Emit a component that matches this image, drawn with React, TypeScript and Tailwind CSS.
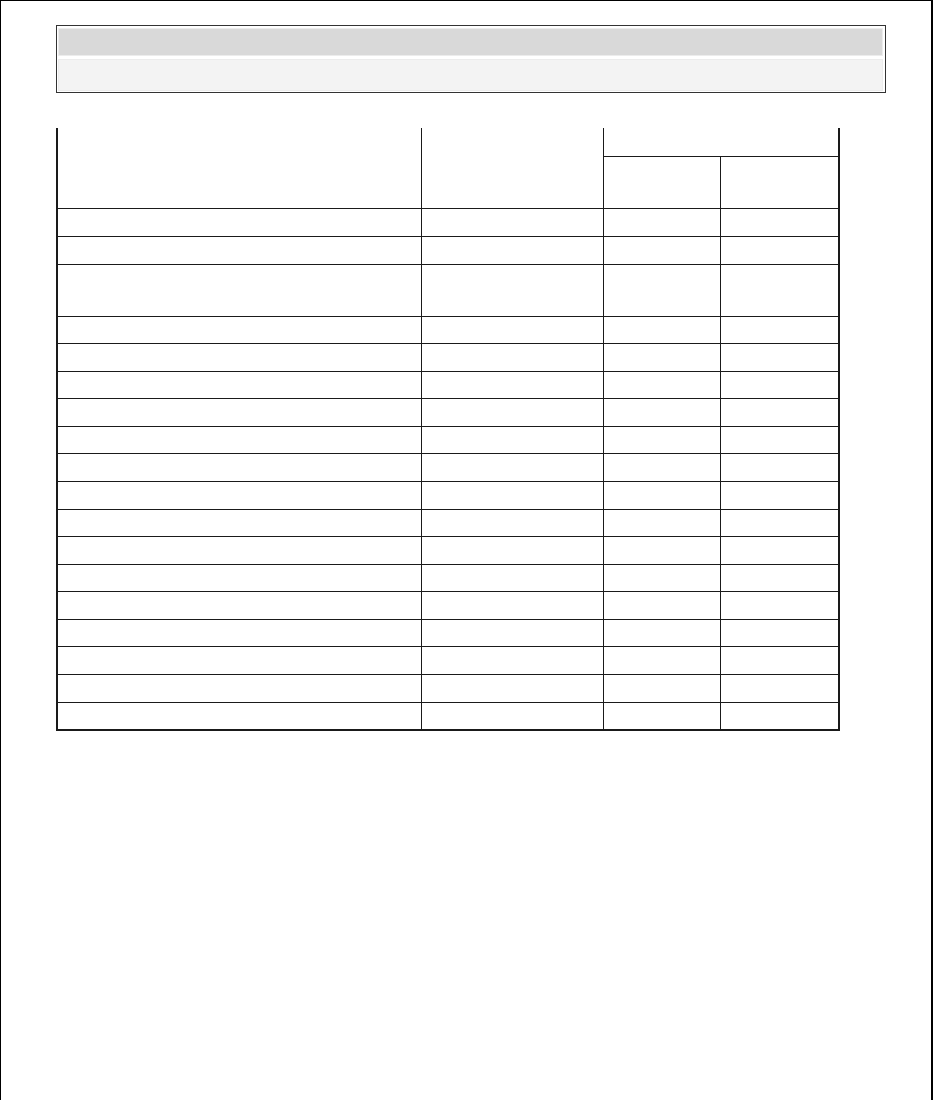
const bodyRows = [
  "h-[27px]",
  "h-[27px]",
  "h-[51px]",
  "h-[26px]",
  "h-[27px]",
  "h-[26px]",
  "h-[27px]",
  "h-[26px]",
  "h-[27px]",
  "h-[27px]",
  "h-[26px]",
  "h-[27px]",
  "h-[26px]",
  "h-[27px]",
  "h-[26px]",
  "h-[27px]",
  "h-[27px]",
  "h-[26px]",
];

const HeaderBox = () => (
  <div className="flex w-[830px] flex-col gap-[3px] border border-[#333333] pb-px pl-px pr-[2px] pt-[2px]">
    <div className="h-[28px] border border-[#ececec] bg-[#d9d9d9]" />
    <div className="h-[32px] border border-[#ececec] bg-[#f3f3f3]" />
  </div>
);

const SpecTable = () => (
  <div className="mt-[35px] w-[784px] border-b-2 border-l-2 border-r-2 border-[#1a1a1a] bg-[#1a1a1a]">
    <div className="grid grid-cols-[363px_181px_116px_117px] grid-rows-[28px_51px] gap-px border-b border-[#1a1a1a]">
      <div className="row-span-2 bg-white" />
      <div className="row-span-2 bg-white" />
      <div className="col-span-2 bg-white" />
      <div className="bg-white" />
      <div className="bg-white" />
    </div>
    <div className="flex flex-col gap-px">
      {bodyRows.map((h, i) => (
        <div key={i} className="grid grid-cols-[363px_181px_116px_117px] gap-px">
          <div className={`${h} bg-white`} />
          <div className={`${h} bg-white`} />
          <div className={`${h} bg-white`} />
          <div className={`${h} bg-white`} />
        </div>
      ))}
    </div>
  </div>
);

export default function App() {
  return (
    <div className="min-h-[1100px] w-[933px] border-l border-r-2 border-t border-black bg-white pl-[55px] pt-[24px] font-['Liberation_Sans',sans-serif]">
      <HeaderBox />
      <SpecTable />
    </div>
  );
}
